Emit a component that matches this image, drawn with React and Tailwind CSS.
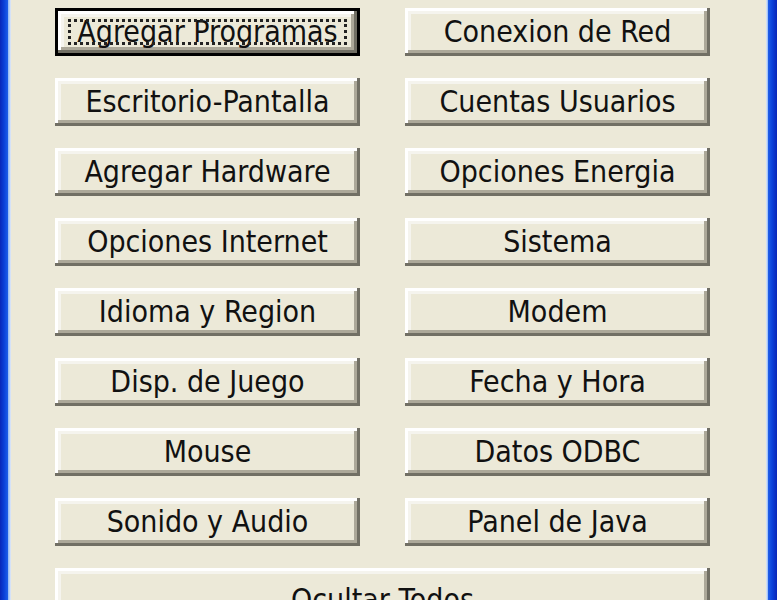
import React from "react";

const buttons = [
  ["Agregar Programas", "Conexion de Red"],
  ["Escritorio-Pantalla", "Cuentas Usuarios"],
  ["Agregar Hardware", "Opciones Energia"],
  ["Opciones Internet", "Sistema"],
  ["Idioma y Region", "Modem"],
  ["Disp. de Juego", "Fecha y Hora"],
  ["Mouse", "Datos ODBC"],
  ["Sonido y Audio", "Panel de Java"],
];

// Classic 3D bevel: white highlight top/left, two-tone shadow bottom/right
const bevel =
  "shadow-[inset_-3px_-3px_0_#716f64,inset_3px_3px_0_#ffffff,inset_-6px_-6px_0_#aca899,inset_6px_6px_0_#f5f4ee]";

function XPButton({ label, isDefault = false, className = "" }) {
  if (isDefault) {
    return (
      <button
        className={`relative flex items-center justify-center border-[3px] border-black bg-[#ece9d8] ${bevel} ${className}`}
      >
        <span className="pointer-events-none absolute inset-x-[10px] inset-y-[8px] border-[3px] border-dotted border-[#222]" />
        <span className="leading-none">{label}</span>
      </button>
    );
  }
  return (
    <button
      className={`flex items-center justify-center bg-[#ece9d8] ${bevel} ${className}`}
    >
      <span className="leading-none">{label}</span>
    </button>
  );
}

export default function App() {
  return (
    <div className="flex h-[600px] w-[777px] overflow-hidden bg-[#ece9d8] font-['DejaVu_Sans_Condensed','DejaVu_Sans',sans-serif] text-[30px] text-[#111] [font-stretch:condensed]">
      {/* left window frame */}
      <div className="flex w-[11px] shrink-0">
        <div className="w-[8px] bg-gradient-to-r from-[#0a26b8] via-[#0b3fd8] to-[#1f5ee8]" />
        <div className="w-[3px] bg-gradient-to-r from-[#8fb6f4] to-[#e3ebf8]" />
      </div>

      {/* dialog body */}
      <div className="flex-1 pl-[44px] pt-[8px]">
        <div className="grid grid-cols-[305px_305px] gap-x-[45px] gap-y-[22px]">
          {buttons.map(([a, b], i) => (
            <React.Fragment key={a}>
              <XPButton label={a} isDefault={i === 0} className="h-[48px]" />
              <XPButton label={b} className="h-[48px]" />
            </React.Fragment>
          ))}
          <XPButton label="Ocultar Todos" className="col-span-2 h-[64px]" />
        </div>
      </div>

      {/* right window frame */}
      <div className="flex w-[11px] shrink-0">
        <div className="w-[2px] bg-gradient-to-r from-[#e3ebf8] to-[#8fb6f4]" />
        <div className="w-[9px] bg-gradient-to-r from-[#1f5ee8] via-[#0b3fd8] to-[#0a26b8]" />
      </div>
    </div>
  );
}
